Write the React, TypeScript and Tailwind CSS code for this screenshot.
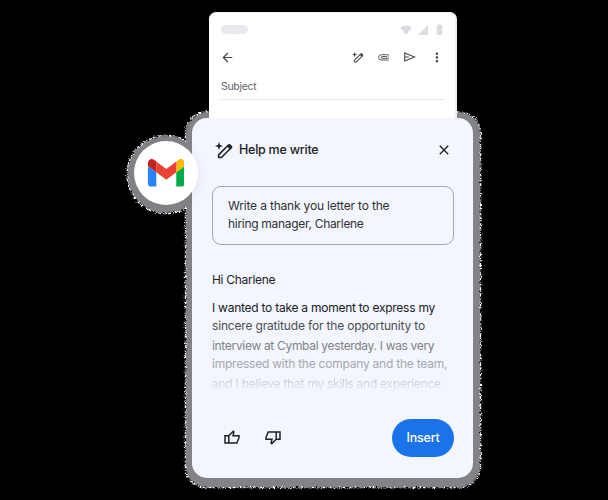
import { MdArrowBack, MdBatteryFull, MdClose, MdMoreVert, MdSignalCellular4Bar, MdSignalWifi4Bar } from "react-icons/md";

function MagicPen({ className }: { className: string }) {
  return (
    <svg viewBox="0 0 18 17" className={className} fill="none">
      <path d="M4 0 5.1 2.9 8 4 5.1 5.1 4 8 2.9 5.1 0 4 2.9 2.9Z" fill="currentColor" />
      <path d="M3.6 15.5v-2.6L13.5 3c.4-.4 1-.4 1.4 0l1.3 1.3c.4.4.4 1 0 1.4l-9.8 9.8Z" stroke="currentColor" strokeWidth="1.6" strokeLinejoin="round" />
      <path d="m12 4.5 2-2 3 3-2 2Z" fill="currentColor" />
    </svg>
  );
}

function Clip({ className }: { className: string }) {
  return (
    <svg viewBox="0 0 12 7" className={className} fill="none" stroke="currentColor" strokeWidth=".9">
      <path d="M10.8 6.1H3.3A2.7 2.7 0 0 1 3.3.7H9.7A1.85 1.85 0 0 1 9.7 4.4H4.2A.95.95 0 0 1 4.2 2.5H9.6" />
    </svg>
  );
}

function Send({ className }: { className: string }) {
  return (
    <svg viewBox="0 0 12 10" className={className} fill="none" stroke="currentColor" strokeWidth="1.1">
      <path d="M.7.9 10.7 5 .7 9.1ZM.7 5H5" />
    </svg>
  );
}

function Thumb({ className }: { className: string }) {
  return (
    <svg viewBox="0 0 16 14" className={className} fill="none" stroke="currentColor" strokeWidth="1.5">
      <path d="M1 5.8h3.8v7.3H1ZM4.8 5.8 9.2 1.2l.7.7-.9 3.9h6v1.9l-2.2 5.4h-8" />
    </svg>
  );
}

function Gmail() {
  return (
    <svg viewBox="52 42 88 66" className="h-[27.5px] w-[36.6px]">
      <path fill="#2684fc" d="M58 108h14V74L52 59v43c0 3.32 2.69 6 6 6" />
      <path fill="#00ac47" d="M120 108h14c3.32 0 6-2.69 6-6V59l-20 15" />
      <path fill="#ffba00" d="M120 48v26l20-15v-8c0-7.42-8.47-11.65-14.4-7.2" />
      <path fill="#ea4335" d="M72 74V48l24 18 24-18v26L96 92" />
      <path fill="#c5221f" d="M52 51v8l20 15V48l-5.6-4.2c-5.94-4.45-14.4-.22-14.4 7.2" />
    </svg>
  );
}

/* Speckled shadow rim behind the dialog and the badge */
function Halo() {
  return (
    <svg viewBox="0 0 608 500" className="absolute inset-0 h-[500px] w-[608px]">
      <defs>
        <filter id="rough" x="0" y="0" width="608" height="500" filterUnits="userSpaceOnUse" colorInterpolationFilters="sRGB">
          <feTurbulence type="fractalNoise" baseFrequency="0.8" numOctaves="2" seed="4" result="n" />
          <feDisplacementMap in="SourceGraphic" in2="n" scale="4" xChannelSelector="R" yChannelSelector="G" />
        </filter>
      </defs>
      <g filter="url(#rough)">
        <g fill="none" stroke="#ffffff" strokeWidth="1.5" strokeDasharray="2 1 1 2 3 1">
          <rect x="185.5" y="112" width="295" height="375.5" rx="21" />
          <circle cx="166" cy="174.5" r="39" />
        </g>
        <g fill="#838287">
          <rect x="186" y="112.5" width="294" height="374.5" rx="21" />
          <circle cx="166" cy="174.5" r="38.5" />
        </g>
      </g>
    </svg>
  );
}

export default function App() {
  return (
    <div className="relative h-[500px] w-[608px] overflow-hidden bg-black font-['Inter','Liberation_Sans',sans-serif] text-[#202124]">
      <Halo />
      <div className="relative flex flex-col pt-3">
        <section className="ml-[209px] h-[106px] w-[248px] rounded-t-[7px] border-r-2 border-t border-[#eeeff1] bg-white pl-3 pr-[11px]">
          <div className="flex h-[33px] items-center justify-between">
            <div className="h-[9px] w-[27px] rounded-full bg-[#e8eaed]" />
            <div className="-mr-[2px] flex items-center text-[#dadce0]">
              <MdSignalWifi4Bar className="mr-[5px] size-[12px]" />
              <MdSignalCellular4Bar className="mr-[4px] size-[12px]" />
              <MdBatteryFull className="size-[13px]" />
            </div>
          </div>
          <div className="flex h-[23px] items-center pb-px text-[#444746]">
            <MdArrowBack className="-ml-px size-[15px]" />
            <MagicPen className="ml-[117px] h-[11px] w-3" />
            <Clip className="ml-[14px] h-[7px] w-3" />
            <Send className="ml-[15px] h-[10px] w-3" />
            <MdMoreVert className="ml-[13px] size-[15px] translate-x-[0.5px]" />
          </div>
          <div className="flex h-[31px] w-[223px] items-center border-b border-[#e3e5e8] pt-[5px] text-[10.5px] tracking-[-0.3px] text-[#5f6368]">Subject</div>
        </section>

        <section className="ml-48 h-[360px] w-[281px] rounded-[15px] bg-[#f3f6fe] px-5 pt-[22px]">
          <header className="flex h-5 items-center">
            <MagicPen className="ml-[3px] h-[17px] w-[18px]" />
            <h1 className="ml-[6px] text-[12.5px] font-medium tracking-[-0.25px]">Help me write</h1>
            <MdClose className="ml-auto mr-px size-4" />
          </header>
          <div className="mt-[26px] flex h-[59px] w-[242px] flex-col justify-center whitespace-nowrap rounded-[9px] border border-[#a4a7b0] pb-[2px] pl-[15px] text-xs leading-[18px] text-[#303134]">
            <p className="tracking-[-0.18px]">Write a thank you letter to the</p>
            <p className="tracking-[-0.3px]">hiring manager, Charlene</p>
          </div>
          <article className="mt-[26px] h-[126px] whitespace-nowrap text-xs leading-[18px]">
            <p className="tracking-[-0.3px]">Hi Charlene</p>
            <p className="mt-[10px] tracking-[-0.25px]">I wanted to take a moment to express my</p>
            <p className="tracking-[-0.17px] text-[#4c4e53]">sincere gratitude for the opportunity to</p>
            <p className="mt-[2px] tracking-[-0.32px] text-[#808288]">interview at Cymbal yesterday. I was very</p>
            <p className="tracking-[-0.23px] text-[#a5a8ae]">impressed with the company and the team,</p>
            <p className="mt-[2px] bg-linear-to-b from-[#bfc2ca] from-20% to-[#f3f6fe] to-100% bg-clip-text tracking-[-0.25px] text-transparent">and I believe that my skills and experience</p>
          </article>
          <footer className="mt-[22px] flex h-[38px] w-[242px] items-center">
            <Thumb className="mb-[2px] ml-[12px] h-[14px] w-4" />
            <Thumb className="ml-[25px] h-[14px] w-4 rotate-180" />
            <button className="ml-auto h-[38px] w-[62px] rounded-[19px] bg-[#1a73e8] text-[12.5px] font-medium tracking-[-0.2px] text-white">Insert</button>
          </footer>
        </section>
      </div>
      <div className="absolute left-[134px] top-[141px] flex size-16 items-center justify-center rounded-full bg-white shadow-[2px_2px_8px_rgba(60,64,67,0.08)]">
        <Gmail />
      </div>
    </div>
  );
}
